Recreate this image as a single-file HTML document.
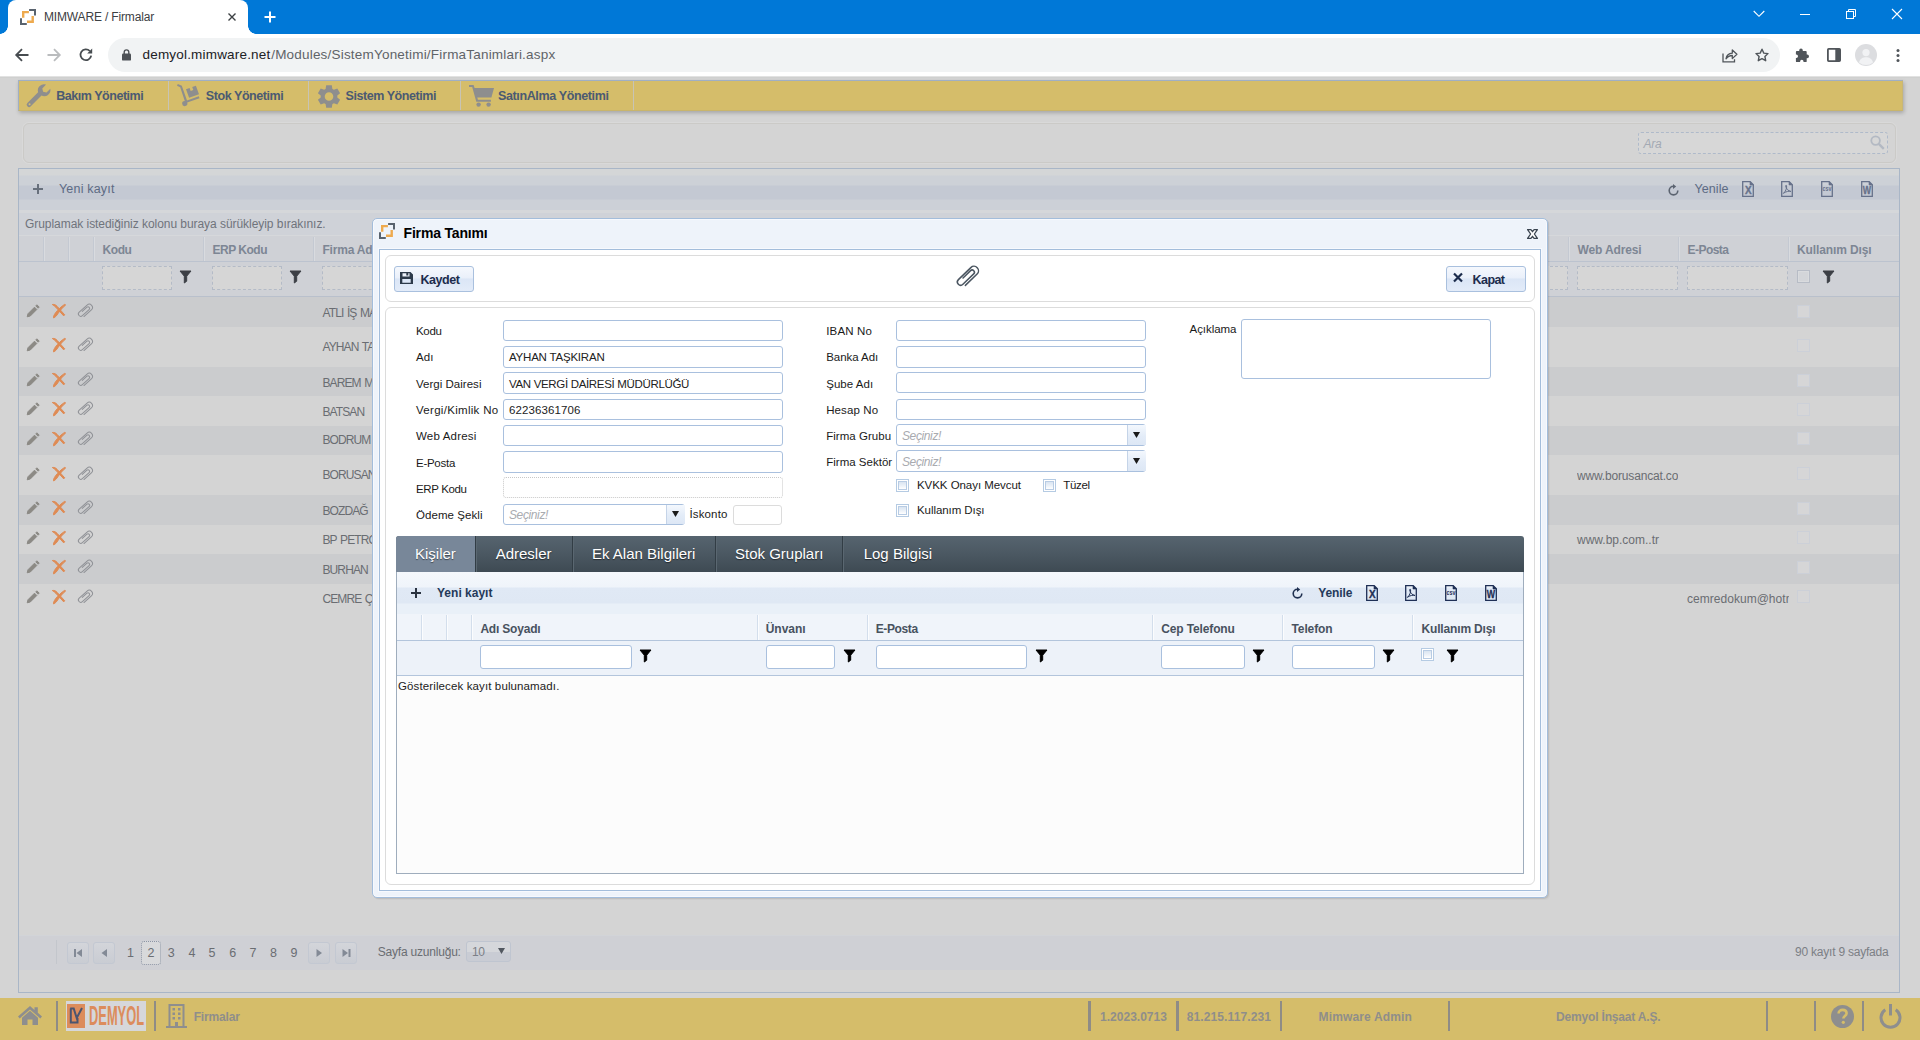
<!DOCTYPE html>
<html lang="tr"><head><meta charset="utf-8"><title>MIMWARE / Firmalar</title>
<style>
*{box-sizing:border-box;margin:0;padding:0}
html,body{width:1920px;height:1040px;overflow:hidden}
body{position:relative;background:#d4d4d4;font-family:"Liberation Sans",sans-serif;font-size:11.5px;color:#000}
.a{position:absolute}
.t{position:absolute;white-space:nowrap;line-height:16px;height:16px}
.b{font-weight:bold}
.i{font-style:italic}
svg{position:absolute;overflow:visible}
/* chrome */
#tabstrip{left:0;top:0;width:1920px;height:34px;background:#0078d7}
#tab{left:8px;top:0;width:240px;height:34px;background:#fff;border-radius:8px 8px 0 0}
#toolbar{left:0;top:34px;width:1920px;height:42px;background:#fff}
#omni{left:108px;top:38px;width:1672px;height:34px;border-radius:17px;background:#f1f3f4}
/* page */
#menu{left:18px;top:80px;width:1885px;height:31px;background:#d5bd6a;border:1px solid #a0afc4;border-right-color:#c9b774;border-bottom-color:#c9b56c;box-shadow:1px 2px 4px rgba(0,0,0,.22)}
.msep{position:absolute;top:81px;width:1px;height:29px;background:#c8c4b4}
.mt{font-size:12.5px;font-weight:bold;color:#4b5a72;top:88px}
#srch{left:23px;top:123px;width:1873px;height:40px;border:1px solid #cbcac7;border-radius:6px;box-shadow:0 0 0 1px #d9d9d9}
#grid{left:18px;top:168px;width:1882px;height:825px;border:1px solid #a9b6c7}
.gt{color:#6f747c}
.gh{font-weight:bold;color:#7d8694;font-size:12px}
.row{position:absolute;left:19px;width:1880px}
.alt{background:#cbccce}
.fin{position:absolute;border:1px dashed #b4bbc7;background:#d6d6d6}
.cell{color:#6a6d72}
/* bottom */
#bbar{left:0;top:998px;width:1920px;height:42px;background:#d5bd6a}
.bsep{position:absolute;top:1001px;height:30px;background:#8f8c86}
.bt{font-weight:bold;color:#8f8e8a;font-size:12px;top:1009px}
/* modal */
#modal{left:372px;top:218px;width:1176px;height:680px;border:1px solid #a3bddb;border-radius:5px;background:#eef3fa;box-shadow:inset 0 0 0 1px #f7f9fd,1px 1px 0 rgba(0,0,0,.07),2px 2px 1px rgba(0,0,0,.03)}
#mcont{left:379px;top:249px;width:1162px;height:642px;border:1px solid #a3bddb;background:#fff;box-shadow:0 0 0 1px #f7f9fd}
.pnl{position:absolute;border:1px solid #dcdcdc;border-radius:6px;background:#fff}
.lbl{color:#1a1a1a;font-size:11.5px}
.inp{position:absolute;height:21px;border:1px solid #a9c0de;border-radius:3px;background:#fff}
.cmb{position:absolute;width:19px;height:19px;background:linear-gradient(#f4f8fd,#e3ecf8 55%,#dde7f5);border-left:1px solid #c5d4e8}
.ph{color:#a9abb0;font-style:italic}
.btn{position:absolute;height:25px;border:1px solid #a9c0de;border-radius:3px;background:linear-gradient(#f5f8fd 0,#eaf0fa 45%,#dbe6f6 50%,#e3ecf9 100%)}
.cb{position:absolute;width:13px;height:13px;border:1px solid #b5cbe3;background:#fff}.cb:after{content:'';position:absolute;box-sizing:border-box;left:1px;top:1px;width:9px;height:9px;border:1px solid #b8cce4;background:linear-gradient(#d9e4f1,#eef3f9 60%,#fff)}
#tabs{left:396px;top:536px;width:1128px;height:36px;background:linear-gradient(#56646f 0,#4b5862 50%,#3e4a53 100%);border-radius:3px 3px 0 0}
.tb{position:absolute;top:536px;height:36px;border-right:1px solid #2f3a42;box-shadow:1px 0 0 #5d6a74}
.tt{font-size:15px;color:#fff;top:544px;line-height:20px;height:20px;text-shadow:0 1px 1px rgba(0,0,0,.5)}
#ig{left:396px;top:572px;width:1128px;height:302px;border:1px solid #9fadbd;border-top:none;background:#fcfcfc}
.ih{font-weight:bold;color:#48525f;font-size:12px}
</style></head>
<body>
<!-- ===== browser chrome ===== -->
<div class="a" id="tabstrip"></div>
<div class="a" id="tab"></div>
<div class="a" style="left:0;top:26px;width:8px;height:8px;background:radial-gradient(circle at 0 0,#0078d7 7.5px,#fff 8px)"></div>
<div class="a" style="left:248px;top:26px;width:8px;height:8px;background:radial-gradient(circle at 100% 0,#0078d7 7.5px,#fff 8px)"></div>
<div class="a" id="toolbar"></div>
<div class="a" style="left:0;top:76px;width:1920px;height:1px;background:#e2e2e2"></div><div class="a" style="left:0;top:77px;width:1920px;height:1px;background:#cfd0cf"></div>
<div class="a" id="omni"></div>
<span class="t" style="left: 44px; top: 9px; font-size: 12px; color: rgb(60, 64, 67); letter-spacing: -0.16px;">MIMWARE / Firmalar</span>
<span class="t" style="left: 142.5px; top: 46px; font-size: 13.5px; color: rgb(32, 33, 36); line-height: 18px; height: 18px; letter-spacing: 0.19px;">demyol.mimware.net</span>
<span class="t" style="left: 271.2px; top: 46px; font-size: 13.5px; color: rgb(95, 99, 104); line-height: 18px; height: 18px; letter-spacing: 0.2px;">/Modules/SistemYonetimi/FirmaTanimlari.aspx</span>
<!-- favicon -->
<svg style="left:20px;top:9px" width="16" height="16" viewBox="0 0 16 16" fill="none"><path d="M9.100 1H15V6.500" stroke="#59636e" stroke-width="2"></path><path d="M1 9.200V15H6.800" stroke="#59636e" stroke-width="2"></path><path d="M3.200 8.700V3.100H8.900" stroke="#eeaa4e" stroke-width="2.400"></path><path d="M12.700 6.900V12.800H7" stroke="#eeaa4e" stroke-width="2.400"></path></svg>
<!-- tab close -->
<svg style="left:228px;top:13px" width="8" height="8" viewBox="0 0 8 8"><path d="M.5.5l7 7M7.5.5l-7 7" stroke="#3c4043" stroke-width="1.4" fill="none"></path></svg>
<!-- new tab -->
<svg style="left:264px;top:11px" width="12" height="12" viewBox="0 0 12 12"><path d="M6 .5v11M.5 6h11" stroke="#fff" stroke-width="2" fill="none"></path></svg>
<!-- back / forward / reload -->
<svg style="left:15px;top:48px" width="14" height="14" viewBox="0 0 14 14"><path d="M13.5 7H2M7 1.2L1.2 7 7 12.8" stroke="#474c50" stroke-width="1.8" fill="none"></path></svg>
<svg style="left:47px;top:48px" width="14" height="14" viewBox="0 0 14 14"><path d="M.5 7H12M7 1.2L12.8 7 7 12.8" stroke="#babcbe" stroke-width="1.8" fill="none"></path></svg>
<svg style="left:79px;top:48px" width="14" height="14" viewBox="0 0 14 14"><path d="M12.2 7.6A5.4 5.4 0 1 1 10.8 3" stroke="#474c50" stroke-width="1.8" fill="none"></path><path d="M13.2.6v5h-5z" fill="#474c50"></path></svg>
<!-- lock -->
<svg style="left:122px;top:49px" width="9" height="12" viewBox="0 0 9 12"><rect x="0" y="4.6" width="9" height="7" rx="1.2" fill="#4d5156"></rect><path d="M2.2 5V3.2a2.3 2.3 0 0 1 4.6 0V5" stroke="#4d5156" stroke-width="1.4" fill="none"></path></svg>
<!-- share -->
<svg style="left:1722px;top:48px" width="16" height="15" viewBox="0 0 16 15"><path d="M1 5.5v8.3h11.5v-2.6" stroke="#50555a" stroke-width="1.3" fill="none"></path><path d="M4 10.8c.6-3.6 2.8-5.4 6.3-5.6V2l4.6 4.3-4.6 4.3V7.5c-2.6 0-4.600.900-6.300 3.300z" stroke="#50555a" stroke-width="1.3" fill="none" stroke-linejoin="round"></path></svg>
<!-- star -->
<svg style="left:1755px;top:48px" width="14" height="14" viewBox="0 0 14 14"><path d="M7 1.2l1.8 3.900 4.200.500-3.100 2.900.8 4.200L7 10.600l-3.700 2.100.8-4.200L1 5.600l4.200-.5z" stroke="#50555a" stroke-width="1.4" fill="none" stroke-linejoin="round"></path></svg>
<!-- puzzle -->
<svg style="left:1794px;top:48px" width="15" height="15" viewBox="0 0 15 15"><path d="M5.200 2.400a1.800 1.800 0 0 1 3.600 0V3h3a.9.900 0 0 1 .9.900v2.700h.5a1.800 1.800 0 0 1 0 3.600h-.5v3a.9.900 0 0 1-.9.900H9.500v-.7a1.700 1.700 0 0 0-3.400 0v.7H2.800a.9.900 0 0 1-.9-.9V10h.4a1.700 1.700 0 0 0 0-3.400h-.4V3.900A.9.900 0 0 1 2.800 3h2.400z" fill="#50555a"></path></svg>
<!-- side panel -->
<svg style="left:1827px;top:48px" width="14" height="14" viewBox="0 0 14 14"><rect x=".9" y=".9" width="12.200" height="12.200" rx=".8" stroke="#50555a" stroke-width="1.800" fill="none"></rect><rect x="8.300" y="1" width="4.800" height="12" fill="#50555a"></rect></svg>
<!-- avatar -->
<svg style="left:1855px;top:44px" width="22" height="22" viewBox="0 0 22 22"><circle cx="11" cy="11" r="11" fill="#dcdde0"></circle><circle cx="11" cy="8.600" r="3.600" fill="#f1f2f4"></circle><path d="M4 18.500c1-4 4-5.300 7-5.300s6 1.300 7 5.300a11 11 0 0 1-14 0z" fill="#f1f2f4"></path></svg>
<!-- kebab -->
<svg style="left:1896px;top:48px" width="4" height="15" viewBox="0 0 4 15"><circle cx="2" cy="2.400" r="1.500" fill="#50555a"></circle><circle cx="2" cy="7.500" r="1.500" fill="#50555a"></circle><circle cx="2" cy="12.600" r="1.500" fill="#50555a"></circle></svg>
<!-- window controls -->
<svg style="left:1753px;top:10px" width="12" height="8" viewBox="0 0 12 8"><path d="M.7 1l5.300 5.300L11.300 1" stroke="#fff" stroke-width="1.100" fill="none"></path></svg>
<svg style="left:1800px;top:14px" width="10" height="1" viewBox="0 0 10 1"><rect width="10" height="1" fill="#fff"></rect></svg>
<svg style="left:1846px;top:9px" width="10" height="10" viewBox="0 0 10 10"><rect x=".5" y="2.500" width="7" height="7" stroke="#fff" fill="none"></rect><path d="M2.500 2.500V.5h7v7h-2" stroke="#fff" fill="none"></path></svg>
<svg style="left:1892px;top:9px" width="10" height="10" viewBox="0 0 10 10"><path d="M0 0l10 10M10 0L0 10" stroke="#fff" stroke-width="1.100" fill="none"></path></svg>

<!-- page -->
<div class="a" id="menu"></div>
<div class="msep" style="left:168px"></div>
<div class="msep" style="left:308px"></div>
<div class="msep" style="left:460px"></div>
<div class="msep" style="left:633px"></div>
<span class="t mt" style="left: 56.3px; letter-spacing: -0.47px;">Bakım Yönetimi</span>
<span class="t mt" style="left: 205.8px; letter-spacing: -0.43px;">Stok Yönetimi</span>
<span class="t mt" style="left: 345.5px; letter-spacing: -0.44px;">Sistem Yönetimi</span>
<span class="t mt" style="left: 498px; letter-spacing: -0.37px;">SatınAlma Yönetimi</span>
<svg style="left:26px;top:84px" width="25" height="24" viewBox="0 0 25 24" fill="#8e8e8e"><path d="M24.300 4.800l-3.800 3.800-3.400-.8-.8-3.400L20.100.6a6.200 6.200 0 0 0-8 7.600L1.400 18.900a2.400 2.400 0 0 0 3.400 3.400L15.500 11.600a6.200 6.200 0 0 0 8.800-6.800zM3.600 21.300a1 1 0 1 1 0-2 1 1 0 0 1 0 2z"></path></svg>
<svg style="left:177px;top:84px" width="24" height="23" viewBox="0 0 24 23" fill="#8e8e8e"><path d="M0 1.800L.8 0l4 1.700L10 16.500l11.800-4.200.7 1.900-12.300 4.400a2.600 2.600 0 1 1-2.400-1.700L3.200 3.200z"></path><path d="M9 5.200l3.600-1.300 1.100 3 2.600-.9-1.100-3 3.700-1.300 3.100 8.600-9.900 3.500z"></path></svg>
<svg style="left:318px;top:84.500px" width="22" height="23" viewBox="0 0 22 23" fill="#8e8e8e" fill-rule="evenodd"><path d="M7.6 3.9L8.2 0.3L13.8 0.3L14.4 3.9L15.9 4.8L19.3 3.5L22.1 8.3L19.3 10.6L19.3 12.4L22.1 14.7L19.3 19.5L15.9 18.2L14.4 19.1L13.8 22.7L8.2 22.7L7.6 19.1L6.1 18.2L2.7 19.5L-0.1 14.7L2.7 12.4L2.7 10.6L-0.1 8.3L2.7 3.5L6.1 4.8ZM6.7 11.5a4.3 4.3 0 1 0 8.6 0a4.3 4.3 0 1 0 -8.6 0z"></path></svg>
<svg style="left:469px;top:85px" width="25" height="22" viewBox="0 0 25 22" fill="#8e8e8e"><path d="M0 0h4.600l1 3H25l-2.600 9.600H8.300l.6 2.200h13v2H7.300L3.200 2H0z"></path><circle cx="9.600" cy="19.600" r="2.200"></circle><circle cx="19.600" cy="19.600" r="2.200"></circle></svg>
<div class="a" id="srch"></div>
<div class="a" style="left:1638px;top:132px;width:250px;height:22px;border:1px dashed #afbaca;border-radius:3px;background:#d7d7d7"></div>
<span class="t i" style="left: 1643.5px; top: 136px; color: rgb(163, 169, 179); font-size: 12px; letter-spacing: -0.23px;">Ara</span>
<svg style="left:1870px;top:135px" width="15" height="15" viewBox="0 0 15 15" fill="none" stroke="#b3b9c3"><circle cx="5.600" cy="5.600" r="4.300" stroke-width="1.800"></circle><path d="M8.800 8.800l5 5" stroke-width="2.400"></path></svg>
<div class="a" id="grid"></div>
<div class="a" style="left:19px;top:169px;width:1880px;height:42px;background:linear-gradient(#d4d6d7 0,#d4d6d7 6px,#cdd1d7 7px,#cdd1d7 16px,#c4c9d3 17px,#c4c9d3 30px,#ccd0d7 31px,#ccd0d7 41px,#d5d7da 41px)"></div>
<div class="a" style="left:19px;top:210px;width:1880px;height:3px;background:#d5d7da"></div>
<div class="a" style="left:19px;top:213px;width:1880px;height:22px;background:#cfd2d8"></div>
<div class="a" style="left:19px;top:235px;width:1880px;height:1px;background:#d6d8db"></div>
<div class="a" style="left:19px;top:236px;width:1880px;height:25px;background:#cfd1d6"></div>
<div class="a" style="left:19px;top:261px;width:1880px;height:1px;background:#bcc3cf"></div>
<div class="a" style="left:19px;top:262px;width:1880px;height:34px;background:#cfd1d6"></div>
<div class="a" style="left:19px;top:296px;width:1880px;height:1px;background:#b9c0cc"></div>
<svg style="left:33px;top:184px" width="10" height="10" fill="#68707c" stroke="#68707c" viewBox="0 0 10 10"><path d="M5 0V10M0 5H10" fill="none" stroke-width="2"></path></svg>
<span class="t" style="left: 59px; top: 181px; font-size: 12.5px; color: rgb(93, 107, 132); letter-spacing: 0.18px;">Yeni kayıt</span>
<svg style="left:1668px;top:184px" width="11" height="12" fill="#5b6370" stroke="#5b6370" viewBox="0 0 11 12"><path d="M5.500 2.300A4.300 4.300 0 1 0 9.800 6.600" fill="none" stroke-width="1.600"></path><path d="M5 0L8.200 2.500 5 4.900Z" stroke="none"></path></svg>
<span class="t" style="left: 1694.5px; top: 181px; font-size: 12.5px; color: rgb(93, 107, 132); letter-spacing: 0.07px;">Yenile</span>
<svg style="left:1741.5px;top:181px" width="12" height="16" viewBox="0 0 12 16" fill="#66718a" stroke="#66718a"><path d="M.7.700H8.200L11.300 3.800V15.300H.7Z" fill="none" stroke-width="1.300"></path><path d="M8 .7L11.300 4H8Z" stroke-width=".6"></path><text transform="translate(6.200 13.300) scale(.9 1)" font-family="Liberation Sans,sans-serif" font-weight="bold" text-anchor="middle" stroke="none" font-size="11" fill="#66718a" style="stroke:#66718a;stroke-width:.35px">X</text></svg>
<svg style="left:1781px;top:181px" width="12" height="16" viewBox="0 0 12 16" fill="#66718a" stroke="#66718a"><path d="M.7.700H8.200L11.300 3.800V15.300H.7Z" fill="none" stroke-width="1.300"></path><path d="M8 .7L11.300 4H8Z" stroke-width=".6"></path><path d="M2.300 12.400C4.600 10.600 5.900 7.300 5.600 4.900 5.400 3.800 4.500 4.100 4.700 5.200 5.100 7.600 7.200 10 10 10.500 8.500 9.700 4.500 10.600 2.300 12.400Z" fill="none" stroke-width="1"></path></svg>
<svg style="left:1820.5px;top:181px" width="12" height="16" viewBox="0 0 12 16" fill="#66718a" stroke="#66718a"><path d="M.7.700H8.200L11.300 3.800V15.300H.7Z" fill="none" stroke-width="1.300"></path><path d="M8 .7L11.300 4H8Z" stroke-width=".6"></path><text transform="translate(6 10) scale(.82 1)" font-family="Liberation Sans,sans-serif" font-weight="bold" text-anchor="middle" stroke="none" font-size="6.500" fill="#66718a">csv</text></svg>
<svg style="left:1860.5px;top:181px" width="12" height="16" viewBox="0 0 12 16" fill="#66718a" stroke="#66718a"><path d="M.7.700H8.200L11.300 3.800V15.300H.7Z" fill="none" stroke-width="1.300"></path><path d="M8 .7L11.300 4H8Z" stroke-width=".6"></path><text transform="translate(6 13.200) scale(.8 1)" font-family="Liberation Sans,sans-serif" font-weight="bold" text-anchor="middle" stroke="none" font-size="11" fill="#66718a" style="stroke:#66718a;stroke-width:.3px">W</text></svg>
<span class="t gt" style="left: 25px; top: 216px; font-size: 12px; letter-spacing: -0.05px;">Gruplamak istediğiniz kolonu buraya sürükleyip bırakınız.</span>
<div class="a" style="left:43px;top:237px;width:1px;height:24px;background:#c4c9d2"></div><div class="a" style="left:44px;top:237px;width:1px;height:24px;background:#d9dbdf"></div>
<div class="a" style="left:68px;top:237px;width:1px;height:24px;background:#c4c9d2"></div><div class="a" style="left:69px;top:237px;width:1px;height:24px;background:#d9dbdf"></div>
<div class="a" style="left:93px;top:237px;width:1px;height:24px;background:#c4c9d2"></div><div class="a" style="left:94px;top:237px;width:1px;height:24px;background:#d9dbdf"></div>
<div class="a" style="left:203px;top:237px;width:1px;height:24px;background:#c4c9d2"></div><div class="a" style="left:204px;top:237px;width:1px;height:24px;background:#d9dbdf"></div>
<div class="a" style="left:313px;top:237px;width:1px;height:24px;background:#c4c9d2"></div><div class="a" style="left:314px;top:237px;width:1px;height:24px;background:#d9dbdf"></div>
<div class="a" style="left:1568px;top:237px;width:1px;height:24px;background:#c4c9d2"></div><div class="a" style="left:1569px;top:237px;width:1px;height:24px;background:#d9dbdf"></div>
<div class="a" style="left:1678px;top:237px;width:1px;height:24px;background:#c4c9d2"></div><div class="a" style="left:1679px;top:237px;width:1px;height:24px;background:#d9dbdf"></div>
<div class="a" style="left:1788px;top:237px;width:1px;height:24px;background:#c4c9d2"></div><div class="a" style="left:1789px;top:237px;width:1px;height:24px;background:#d9dbdf"></div>
<span class="t gh" style="left: 102.5px; top: 242px; letter-spacing: -0.41px;">Kodu</span>
<span class="t gh" style="left: 212.5px; top: 242px; letter-spacing: -0.49px;">ERP Kodu</span>
<span class="t gh" style="left: 322.5px; top: 242px; letter-spacing: -0.21px;">Firma Adı</span>
<span class="t gh" style="left: 1577.5px; top: 242px; letter-spacing: -0.14px;">Web Adresi</span>
<span class="t gh" style="left: 1687.5px; top: 242px; letter-spacing: -0.53px;">E-Posta</span>
<span class="t gh" style="left: 1797px; top: 242px; letter-spacing: -0.12px;">Kullanım Dışı</span>
<div class="fin" style="left:102px;top:266px;width:70px;height:24px"></div>
<div class="fin" style="left:212px;top:266px;width:70px;height:24px"></div>
<div class="fin" style="left:322px;top:266px;width:60px;height:24px"></div>
<div class="fin" style="left:1540px;top:266px;width:28px;height:24px"></div>
<div class="fin" style="left:1577px;top:266px;width:101px;height:24px"></div>
<div class="fin" style="left:1687px;top:266px;width:101px;height:24px"></div>
<svg style="left:180px;top:271px" width="11" height="12" fill="#3c3f45" stroke="#3c3f45" viewBox="0 0 11 12"><path d="M0 0H11L6.700 5.200V10.200L4.300 12V5.200Z"></path></svg>
<svg style="left:290px;top:271px" width="11" height="12" fill="#3c3f45" stroke="#3c3f45" viewBox="0 0 11 12"><path d="M0 0H11L6.700 5.200V10.200L4.300 12V5.200Z"></path></svg>
<svg style="left:1823px;top:271px" width="11" height="12" fill="#3c3f45" stroke="#3c3f45" viewBox="0 0 11 12"><path d="M0 0H11L6.700 5.200V10.200L4.300 12V5.200Z"></path></svg>
<div class="a" style="left:1797px;top:270px;width:13px;height:13px;border:1px solid #b7bcc6;background:#d3d5d9;box-shadow:inset 0 0 0 1px #d9dbde"></div>
<div class="row alt" style="top:297px;height:30px"></div>
<svg style="left:27px;top:305px" width="12" height="12" fill="#8c8a85" stroke="#8c8a85" viewBox="0 0 12 12"><path d="M8.800.9L9.900-.2 12.200 2.100 11.100 3.200ZM7.500 2.200L9.800 4.500 3.300 11 .2 11.800 1 8.700Z"></path></svg>
<svg style="left:52px;top:304px" width="14" height="14" fill="#df8b54" stroke="#df8b54" viewBox="0 0 14 14"><path d="M12.600.4C9.500 2.200 5.800 5.800 3.400 9 2 11 1.200 12.600 1.600 13.900 3.200 13.500 4.600 11.600 6 9.600 8 6.600 10.800 3.200 13.700 1 13.500.6 13.100.4 12.600.4Z"></path><path d="M.3.500C2.200.200 3.800.800 5.200 2.400 7.600 5 10.400 8.300 12.700 10.800L11.700 11.900C9.400 9.400 6.600 6.100 4.100 3.600 2.900 2.300 1.600 1.300.3.500Z"></path></svg>
<svg style="left:78px;top:304px" width="15" height="14" fill="#8f9196" stroke="#8f9196" viewBox="0 0 15 14"><g transform="translate(7.500 6.800) rotate(48)" fill="none" stroke-width="1" stroke-linecap="round"><path d="M3.200 5V-5A3.200 3.200 0 0 0-3.200-5V5.600A2.350 2.350 0 0 0 1.500 5.600V-3.500A1.600 1.600 0 0 0-1.700-3.500V2.800"></path></g></svg>
<span class="t cell" style="left:322.500px;top:304.5px;font-size:12px;letter-spacing:-.9px;word-spacing:1.100px">ATLI İŞ MAKİNALARI</span>
<div class="a" style="left:1797px;top:304.5px;width:13px;height:13px;border:1px solid #ccd0d8;background:#d6d6d7"></div>
<svg style="left:27px;top:339.3px" width="12" height="12" fill="#8c8a85" stroke="#8c8a85" viewBox="0 0 12 12"><path d="M8.800.9L9.900-.2 12.200 2.100 11.100 3.200ZM7.500 2.200L9.800 4.500 3.300 11 .2 11.800 1 8.700Z"></path></svg>
<svg style="left:52px;top:338.3px" width="14" height="14" fill="#df8b54" stroke="#df8b54" viewBox="0 0 14 14"><path d="M12.600.4C9.500 2.200 5.800 5.800 3.400 9 2 11 1.200 12.600 1.600 13.900 3.200 13.500 4.600 11.600 6 9.600 8 6.600 10.800 3.200 13.700 1 13.500.6 13.100.4 12.600.4Z"></path><path d="M.3.500C2.200.200 3.800.800 5.200 2.400 7.600 5 10.400 8.300 12.700 10.800L11.700 11.900C9.400 9.400 6.600 6.100 4.100 3.600 2.900 2.300 1.600 1.300.3.500Z"></path></svg>
<svg style="left:78px;top:338.3px" width="15" height="14" fill="#8f9196" stroke="#8f9196" viewBox="0 0 15 14"><g transform="translate(7.500 6.800) rotate(48)" fill="none" stroke-width="1" stroke-linecap="round"><path d="M3.200 5V-5A3.200 3.200 0 0 0-3.200-5V5.600A2.350 2.350 0 0 0 1.500 5.600V-3.500A1.600 1.600 0 0 0-1.700-3.500V2.800"></path></g></svg>
<span class="t cell" style="left:322.500px;top:339.4px;font-size:12px;letter-spacing:-.9px;word-spacing:1.100px">AYHAN TAŞKIRAN</span>
<div class="a" style="left:1797px;top:338.8px;width:13px;height:13px;border:1px solid #ccd0d8;background:#d6d6d7"></div>
<div class="row alt" style="top:367px;height:29px"></div>
<svg style="left:27px;top:374.2px" width="12" height="12" fill="#8c8a85" stroke="#8c8a85" viewBox="0 0 12 12"><path d="M8.800.9L9.900-.2 12.200 2.100 11.100 3.200ZM7.500 2.200L9.800 4.500 3.300 11 .2 11.800 1 8.700Z"></path></svg>
<svg style="left:52px;top:373.2px" width="14" height="14" fill="#df8b54" stroke="#df8b54" viewBox="0 0 14 14"><path d="M12.600.4C9.500 2.200 5.800 5.800 3.400 9 2 11 1.200 12.600 1.600 13.900 3.200 13.500 4.600 11.600 6 9.600 8 6.600 10.800 3.200 13.700 1 13.500.6 13.100.4 12.600.4Z"></path><path d="M.3.500C2.200.200 3.800.800 5.200 2.400 7.600 5 10.400 8.300 12.700 10.800L11.700 11.900C9.400 9.400 6.600 6.100 4.100 3.600 2.900 2.300 1.600 1.300.3.500Z"></path></svg>
<svg style="left:78px;top:373.2px" width="15" height="14" fill="#8f9196" stroke="#8f9196" viewBox="0 0 15 14"><g transform="translate(7.500 6.800) rotate(48)" fill="none" stroke-width="1" stroke-linecap="round"><path d="M3.200 5V-5A3.200 3.200 0 0 0-3.200-5V5.600A2.350 2.350 0 0 0 1.500 5.600V-3.500A1.600 1.600 0 0 0-1.700-3.500V2.800"></path></g></svg>
<span class="t cell" style="left:322.500px;top:374.5px;font-size:12px;letter-spacing:-.9px;word-spacing:1.100px">BAREM MÜHENDİSLİK</span>
<div class="a" style="left:1797px;top:373.7px;width:13px;height:13px;border:1px solid #ccd0d8;background:#d6d6d7"></div>
<svg style="left:27px;top:403.4px" width="12" height="12" fill="#8c8a85" stroke="#8c8a85" viewBox="0 0 12 12"><path d="M8.800.9L9.900-.2 12.200 2.100 11.100 3.200ZM7.500 2.200L9.800 4.500 3.300 11 .2 11.800 1 8.700Z"></path></svg>
<svg style="left:52px;top:402.4px" width="14" height="14" fill="#df8b54" stroke="#df8b54" viewBox="0 0 14 14"><path d="M12.600.4C9.500 2.200 5.800 5.800 3.400 9 2 11 1.200 12.600 1.600 13.900 3.200 13.500 4.600 11.600 6 9.600 8 6.600 10.800 3.200 13.700 1 13.500.6 13.100.4 12.600.4Z"></path><path d="M.3.500C2.200.200 3.800.800 5.200 2.400 7.600 5 10.400 8.300 12.700 10.800L11.700 11.900C9.400 9.400 6.600 6.100 4.100 3.600 2.900 2.300 1.600 1.300.3.500Z"></path></svg>
<svg style="left:78px;top:402.4px" width="15" height="14" fill="#8f9196" stroke="#8f9196" viewBox="0 0 15 14"><g transform="translate(7.500 6.800) rotate(48)" fill="none" stroke-width="1" stroke-linecap="round"><path d="M3.200 5V-5A3.200 3.200 0 0 0-3.200-5V5.600A2.350 2.350 0 0 0 1.500 5.600V-3.500A1.600 1.600 0 0 0-1.700-3.500V2.800"></path></g></svg>
<span class="t cell" style="left:322.500px;top:403.5px;font-size:12px;letter-spacing:-.9px;word-spacing:1.100px">BATSAN</span>
<div class="a" style="left:1797px;top:402.9px;width:13px;height:13px;border:1px solid #ccd0d8;background:#d6d6d7"></div>
<div class="row alt" style="top:426px;height:29px"></div>
<svg style="left:27px;top:432.6px" width="12" height="12" fill="#8c8a85" stroke="#8c8a85" viewBox="0 0 12 12"><path d="M8.800.9L9.900-.2 12.200 2.100 11.100 3.200ZM7.500 2.200L9.800 4.500 3.300 11 .2 11.800 1 8.700Z"></path></svg>
<svg style="left:52px;top:431.6px" width="14" height="14" fill="#df8b54" stroke="#df8b54" viewBox="0 0 14 14"><path d="M12.600.4C9.500 2.200 5.800 5.800 3.400 9 2 11 1.200 12.600 1.600 13.900 3.200 13.500 4.600 11.600 6 9.600 8 6.600 10.800 3.200 13.700 1 13.500.6 13.100.4 12.600.4Z"></path><path d="M.3.500C2.200.200 3.800.800 5.200 2.400 7.600 5 10.400 8.300 12.700 10.800L11.700 11.900C9.400 9.400 6.600 6.100 4.100 3.600 2.900 2.300 1.600 1.300.3.500Z"></path></svg>
<svg style="left:78px;top:431.6px" width="15" height="14" fill="#8f9196" stroke="#8f9196" viewBox="0 0 15 14"><g transform="translate(7.500 6.800) rotate(48)" fill="none" stroke-width="1" stroke-linecap="round"><path d="M3.200 5V-5A3.200 3.200 0 0 0-3.200-5V5.600A2.350 2.350 0 0 0 1.500 5.600V-3.500A1.600 1.600 0 0 0-1.700-3.500V2.800"></path></g></svg>
<span class="t cell" style="left:322.500px;top:432.3px;font-size:12px;letter-spacing:-.9px;word-spacing:1.100px">BODRUM BELEDİYESİ</span>
<div class="a" style="left:1797px;top:432.1px;width:13px;height:13px;border:1px solid #ccd0d8;background:#d6d6d7"></div>
<svg style="left:27px;top:467.7px" width="12" height="12" fill="#8c8a85" stroke="#8c8a85" viewBox="0 0 12 12"><path d="M8.800.9L9.900-.2 12.200 2.100 11.100 3.200ZM7.500 2.200L9.800 4.500 3.300 11 .2 11.800 1 8.700Z"></path></svg>
<svg style="left:52px;top:466.7px" width="14" height="14" fill="#df8b54" stroke="#df8b54" viewBox="0 0 14 14"><path d="M12.600.4C9.500 2.200 5.800 5.800 3.400 9 2 11 1.200 12.600 1.600 13.900 3.200 13.500 4.600 11.600 6 9.600 8 6.600 10.800 3.200 13.700 1 13.500.6 13.100.4 12.600.4Z"></path><path d="M.3.500C2.200.200 3.800.800 5.200 2.400 7.600 5 10.400 8.300 12.700 10.800L11.700 11.900C9.400 9.400 6.600 6.100 4.100 3.600 2.900 2.300 1.600 1.300.3.500Z"></path></svg>
<svg style="left:78px;top:466.7px" width="15" height="14" fill="#8f9196" stroke="#8f9196" viewBox="0 0 15 14"><g transform="translate(7.500 6.800) rotate(48)" fill="none" stroke-width="1" stroke-linecap="round"><path d="M3.200 5V-5A3.200 3.200 0 0 0-3.200-5V5.600A2.350 2.350 0 0 0 1.500 5.600V-3.500A1.600 1.600 0 0 0-1.700-3.500V2.800"></path></g></svg>
<span class="t cell" style="left:322.500px;top:467.4px;font-size:12px;letter-spacing:-.9px;word-spacing:1.100px">BORUSAN MAKİNA</span>
<div class="a" style="left:1797px;top:467.2px;width:13px;height:13px;border:1px solid #ccd0d8;background:#d6d6d7"></div>
<div class="row alt" style="top:495px;height:30px"></div>
<svg style="left:27px;top:502.2px" width="12" height="12" fill="#8c8a85" stroke="#8c8a85" viewBox="0 0 12 12"><path d="M8.800.9L9.900-.2 12.200 2.100 11.100 3.200ZM7.500 2.200L9.800 4.500 3.300 11 .2 11.800 1 8.700Z"></path></svg>
<svg style="left:52px;top:501.2px" width="14" height="14" fill="#df8b54" stroke="#df8b54" viewBox="0 0 14 14"><path d="M12.600.4C9.500 2.200 5.800 5.800 3.400 9 2 11 1.200 12.600 1.600 13.900 3.200 13.500 4.600 11.600 6 9.600 8 6.600 10.800 3.200 13.700 1 13.500.6 13.100.4 12.600.4Z"></path><path d="M.3.500C2.200.200 3.800.800 5.200 2.400 7.600 5 10.400 8.300 12.700 10.800L11.700 11.900C9.400 9.400 6.600 6.100 4.100 3.600 2.900 2.300 1.600 1.300.3.500Z"></path></svg>
<svg style="left:78px;top:501.2px" width="15" height="14" fill="#8f9196" stroke="#8f9196" viewBox="0 0 15 14"><g transform="translate(7.500 6.800) rotate(48)" fill="none" stroke-width="1" stroke-linecap="round"><path d="M3.200 5V-5A3.200 3.200 0 0 0-3.200-5V5.600A2.350 2.350 0 0 0 1.500 5.600V-3.500A1.600 1.600 0 0 0-1.700-3.500V2.800"></path></g></svg>
<span class="t cell" style="left:322.500px;top:502.9px;font-size:12px;letter-spacing:-.9px;word-spacing:1.100px">BOZDAĞ</span>
<div class="a" style="left:1797px;top:501.7px;width:13px;height:13px;border:1px solid #ccd0d8;background:#d6d6d7"></div>
<svg style="left:27px;top:531.8px" width="12" height="12" fill="#8c8a85" stroke="#8c8a85" viewBox="0 0 12 12"><path d="M8.800.9L9.900-.2 12.200 2.100 11.100 3.200ZM7.500 2.200L9.800 4.500 3.300 11 .2 11.800 1 8.700Z"></path></svg>
<svg style="left:52px;top:530.8px" width="14" height="14" fill="#df8b54" stroke="#df8b54" viewBox="0 0 14 14"><path d="M12.600.4C9.500 2.200 5.800 5.800 3.400 9 2 11 1.200 12.600 1.600 13.900 3.200 13.500 4.600 11.600 6 9.600 8 6.600 10.800 3.200 13.700 1 13.500.6 13.100.4 12.600.4Z"></path><path d="M.3.500C2.200.200 3.800.800 5.200 2.400 7.600 5 10.400 8.300 12.700 10.800L11.700 11.900C9.400 9.400 6.600 6.100 4.100 3.600 2.900 2.300 1.600 1.300.3.500Z"></path></svg>
<svg style="left:78px;top:530.8px" width="15" height="14" fill="#8f9196" stroke="#8f9196" viewBox="0 0 15 14"><g transform="translate(7.500 6.800) rotate(48)" fill="none" stroke-width="1" stroke-linecap="round"><path d="M3.200 5V-5A3.200 3.200 0 0 0-3.200-5V5.600A2.350 2.350 0 0 0 1.500 5.600V-3.500A1.600 1.600 0 0 0-1.700-3.500V2.800"></path></g></svg>
<span class="t cell" style="left:322.500px;top:531.9px;font-size:12px;letter-spacing:-.9px;word-spacing:1.100px">BP PETROLLERİ A.Ş.</span>
<div class="a" style="left:1797px;top:531.3px;width:13px;height:13px;border:1px solid #ccd0d8;background:#d6d6d7"></div>
<div class="row alt" style="top:554px;height:30px"></div>
<svg style="left:27px;top:561.3px" width="12" height="12" fill="#8c8a85" stroke="#8c8a85" viewBox="0 0 12 12"><path d="M8.800.9L9.900-.2 12.200 2.100 11.100 3.200ZM7.500 2.200L9.800 4.500 3.300 11 .2 11.800 1 8.700Z"></path></svg>
<svg style="left:52px;top:560.3px" width="14" height="14" fill="#df8b54" stroke="#df8b54" viewBox="0 0 14 14"><path d="M12.600.4C9.500 2.200 5.800 5.800 3.400 9 2 11 1.200 12.600 1.600 13.900 3.200 13.500 4.600 11.600 6 9.600 8 6.600 10.800 3.200 13.700 1 13.500.6 13.100.4 12.600.4Z"></path><path d="M.3.500C2.200.200 3.800.800 5.200 2.400 7.600 5 10.400 8.300 12.700 10.800L11.700 11.900C9.400 9.400 6.600 6.100 4.100 3.600 2.900 2.300 1.600 1.300.3.500Z"></path></svg>
<svg style="left:78px;top:560.3px" width="15" height="14" fill="#8f9196" stroke="#8f9196" viewBox="0 0 15 14"><g transform="translate(7.500 6.800) rotate(48)" fill="none" stroke-width="1" stroke-linecap="round"><path d="M3.200 5V-5A3.200 3.200 0 0 0-3.200-5V5.600A2.350 2.350 0 0 0 1.500 5.600V-3.500A1.600 1.600 0 0 0-1.700-3.500V2.800"></path></g></svg>
<span class="t cell" style="left:322.500px;top:561.8px;font-size:12px;letter-spacing:-.9px;word-spacing:1.100px">BURHAN</span>
<div class="a" style="left:1797px;top:560.8px;width:13px;height:13px;border:1px solid #ccd0d8;background:#d6d6d7"></div>
<svg style="left:27px;top:590.9px" width="12" height="12" fill="#8c8a85" stroke="#8c8a85" viewBox="0 0 12 12"><path d="M8.800.9L9.900-.2 12.200 2.100 11.100 3.200ZM7.500 2.200L9.800 4.500 3.300 11 .2 11.800 1 8.700Z"></path></svg>
<svg style="left:52px;top:589.9px" width="14" height="14" fill="#df8b54" stroke="#df8b54" viewBox="0 0 14 14"><path d="M12.600.4C9.500 2.200 5.800 5.800 3.400 9 2 11 1.200 12.600 1.600 13.900 3.200 13.500 4.600 11.600 6 9.600 8 6.600 10.800 3.200 13.700 1 13.500.6 13.100.4 12.600.4Z"></path><path d="M.3.500C2.200.200 3.800.800 5.200 2.400 7.600 5 10.400 8.300 12.700 10.800L11.700 11.900C9.400 9.400 6.600 6.100 4.100 3.600 2.900 2.300 1.600 1.300.3.500Z"></path></svg>
<svg style="left:78px;top:589.9px" width="15" height="14" fill="#8f9196" stroke="#8f9196" viewBox="0 0 15 14"><g transform="translate(7.500 6.800) rotate(48)" fill="none" stroke-width="1" stroke-linecap="round"><path d="M3.200 5V-5A3.200 3.200 0 0 0-3.200-5V5.600A2.350 2.350 0 0 0 1.500 5.600V-3.500A1.600 1.600 0 0 0-1.700-3.500V2.800"></path></g></svg>
<span class="t cell" style="left:322.500px;top:590.6px;font-size:12px;letter-spacing:-.9px;word-spacing:1.100px">CEMRE ÇELİK</span>
<div class="a" style="left:1797px;top:590.4px;width:13px;height:13px;border:1px solid #ccd0d8;background:#d6d6d7"></div>
<div class="a" style="left:1577px;top:467.500px;width:101px;height:16px;overflow:hidden"><span class="t cell" style="left: 0px; top: 0px; font-size: 12px; letter-spacing: -0.17px;">www.borusancat.com</span></div>
<span class="t cell" style="left: 1577px; top: 531.5px; font-size: 12px;">www.bp.com..tr</span>
<div class="a" style="left:1687px;top:590.500px;width:102px;height:16px;overflow:hidden"><span class="t cell" style="left: 0px; top: 0px; font-size: 12px; letter-spacing: 0.03px;">cemredokum@hotmail.com</span></div>
<div class="a" style="left:19px;top:935px;width:1880px;height:35px;background:#cfd0d5;border-top:1px solid #d2d4d8"></div>
<div class="a" style="left:56px;top:940px;width:1px;height:24px;background:#c3c6cc"></div>
<div class="a" style="left:67px;top:942px;width:22px;height:22px;border:1px solid #c3c8d2;border-radius:3px;background:linear-gradient(#d3d5da,#c9ccd3)"></div>
<svg style="left:74px;top:949px" width="9" height="8" viewBox="0 0 9 8" fill="#838a96"><path d="M0 0h2v8H0zM8 0v8L2.500 4z"></path></svg>
<div class="a" style="left:93px;top:942px;width:22px;height:22px;border:1px solid #c3c8d2;border-radius:3px;background:linear-gradient(#d3d5da,#c9ccd3)"></div>
<svg style="left:100px;top:949px" width="9" height="8" viewBox="0 0 9 8" fill="#838a96"><path d="M7 0v8L1.500 4z"></path></svg>
<div class="a" style="left:308px;top:942px;width:22px;height:22px;border:1px solid #c3c8d2;border-radius:3px;background:linear-gradient(#d3d5da,#c9ccd3)"></div>
<svg style="left:315px;top:949px" width="9" height="8" viewBox="0 0 9 8" fill="#838a96"><path d="M1.500 0v8L7 4z"></path></svg>
<div class="a" style="left:335px;top:942px;width:22px;height:22px;border:1px solid #c3c8d2;border-radius:3px;background:linear-gradient(#d3d5da,#c9ccd3)"></div>
<svg style="left:342px;top:949px" width="9" height="8" viewBox="0 0 9 8" fill="#838a96"><path d="M6.500 0h2v8h-2zM.500 0v8L6 4z"></path></svg>
<div class="a" style="left:141px;top:941px;width:20px;height:24px;border:1px dotted #8c95a5;border-radius:3px;background:#d8d9db"></div>
<span class="t cell" style="left:120.6px;width:20px;text-align:center;top:944.500px;font-size:12.500px">1</span>
<span class="t cell" style="left:141px;width:20px;text-align:center;top:944.500px;font-size:12.500px">2</span>
<span class="t cell" style="left:161.2px;width:20px;text-align:center;top:944.500px;font-size:12.500px">3</span>
<span class="t cell" style="left:182px;width:20px;text-align:center;top:944.500px;font-size:12.500px">4</span>
<span class="t cell" style="left:202px;width:20px;text-align:center;top:944.500px;font-size:12.500px">5</span>
<span class="t cell" style="left:222.7px;width:20px;text-align:center;top:944.500px;font-size:12.500px">6</span>
<span class="t cell" style="left:243px;width:20px;text-align:center;top:944.500px;font-size:12.500px">7</span>
<span class="t cell" style="left:263.5px;width:20px;text-align:center;top:944.500px;font-size:12.500px">8</span>
<span class="t cell" style="left:284px;width:20px;text-align:center;top:944.500px;font-size:12.500px">9</span>
<span class="t cell" style="left: 377.7px; top: 943.5px; font-size: 12px; letter-spacing: -0.2px;">Sayfa uzunluğu:</span>
<div class="a" style="left:465.500px;top:940.500px;width:45px;height:21px;border:1px solid #bfc5d0;border-radius:3px;background:linear-gradient(#d5d7db 50%,#c9ccd4 50%)"></div>
<span class="t cell" style="left: 472px; top: 944px; font-size: 12px; color: rgb(123, 127, 134); letter-spacing: -0.43px;">10</span>
<svg style="left:498px;top:947.500px" width="7" height="6" viewBox="0 0 7 6" fill="#525860"><path d="M0 0h7L3.500 6z"></path></svg>
<span class="t cell" style="left: 1795px; top: 944px; font-size: 12px; color: rgb(124, 127, 133); letter-spacing: -0.22px;">90 kayıt 9 sayfada</span>
<div class="a" id="bbar"></div>
<div class="bsep" style="left:55.5px;width:2.5px"></div>
<div class="bsep" style="left:153.8px;width:2.5px"></div>
<div class="bsep" style="left:1088px;width:3px"></div>
<div class="bsep" style="left:1176px;width:3px"></div>
<div class="bsep" style="left:1280px;width:2px"></div>
<div class="bsep" style="left:1448px;width:2px"></div>
<div class="bsep" style="left:1766px;width:2px"></div>
<div class="bsep" style="left:1814px;width:2px"></div>
<div class="bsep" style="left:1862px;width:2px"></div>
<svg style="left:18px;top:1006px" width="24" height="19" viewBox="0 0 24 19" fill="#8e8e8e"><path d="M12 0l4.500 3.900V1.200h3.300V6.800L24 10.400l-1.700 2L12 3.600 1.700 12.400 0 10.400z"></path><path d="M12 4.800l8 7V19h-5.500v-5.500h-5V19H4v-7.200z"></path></svg>
<div class="a" style="left:66px;top:1001px;width:80px;height:30px;background:#d6d7da"></div>
<div class="a" style="left:67px;top:1004px;width:18px;height:24px;background:#dc8c5c"></div>
<svg style="left:69px;top:1007px" width="14" height="17" viewBox="0 0 14 17" fill="none" stroke="#4b5570" stroke-width="2"><path d="M1.200 1.500h3.500l3 9.500L13 1M1.800 1.500V15.500H8.500V11"></path></svg>
<span class="t b" style="left:88.900px;top:1000.500px;font-size:27px;line-height:30px;height:30px;color:#dc8c5c;transform-origin:0 50%;transform:scaleX(.477)">DEMYOL</span>
<svg style="left:166px;top:1004px" width="21" height="24" viewBox="0 0 21 24" fill="#8e8e8e"><path d="M2.500 0h16v22H21v2H0v-2h2.500zM4.500 2v20h4.500v-4h3v4h4.500V2z"></path><path d="M6.500 4h2.500v2.500H6.500zM12 4h2.500v2.500H12zM6.500 8.500h2.500V11H6.500zM12 8.500h2.500V11H12zM6.500 13h2.500v2.500H6.500zM12 13h2.500v2.500H12z"></path></svg>
<span class="t bt" style="left: 193.7px; letter-spacing: -0.17px;">Firmalar</span>
<span class="t bt" style="left: 1100px; letter-spacing: 0.02px;">1.2023.0713</span>
<span class="t bt" style="left: 1186.7px; letter-spacing: 0.12px;">81.215.117.231</span>
<span class="t bt" style="left: 1318.5px; letter-spacing: 0.15px;">Mimware Admin</span>
<span class="t bt" style="left: 1556px; letter-spacing: -0.17px;">Demyol İnşaat A.Ş.</span>
<svg style="left:1830.500px;top:1004.500px" width="23" height="23" viewBox="0 0 23 23"><circle cx="11.500" cy="11.500" r="11.500" fill="#8e8e8e"></circle><path d="M7.600 8.600c0-2.300 1.700-3.700 4-3.700 2.400 0 4 1.400 4 3.400 0 2.600-3.200 2.900-3.200 5.200" fill="none" stroke="#d5bd6a" stroke-width="2.600"></path><circle cx="12.300" cy="17.300" r="1.600" fill="#d5bd6a"></circle></svg>
<svg style="left:1878.500px;top:1004px" width="23" height="24" viewBox="0 0 23 24" fill="none" stroke="#8e8e8e" stroke-width="3"><path d="M6.300 5.800a9.500 9.500 0 1 0 10.400 0"></path><path d="M11.500 0v11.500"></path></svg>
<!-- modal -->
<div class="a" id="modal"></div>
<svg style="left:379px;top:223px" width="16" height="16" viewBox="0 0 16 16" fill="none"><path d="M9.100 1H15V6.500" stroke="#59636e" stroke-width="2"></path><path d="M1 9.200V15H6.800" stroke="#59636e" stroke-width="2"></path><path d="M3.200 8.700V3.100H8.900" stroke="#eeaa4e" stroke-width="2.400"></path><path d="M12.700 6.900V12.800H7" stroke="#eeaa4e" stroke-width="2.400"></path></svg>
<span class="t b" style="left: 403.5px; top: 224px; font-size: 14px; line-height: 18px; height: 18px; color: rgb(0, 0, 0); letter-spacing: -0.17px;">Firma Tanımı</span>
<svg style="left:1527px;top:229px" width="11" height="10" viewBox="0 0 11 10" fill="#fff" stroke="#39434f" stroke-width="1.300" stroke-linejoin="round"><path d="M.600.600H3.900L5.500 2.700 7.100.600H10.400L7.400 5 10.400 9.400H7.100L5.500 7.300 3.900 9.400H.600L3.600 5Z"></path></svg>
<div class="a" id="mcont"></div>
<div class="pnl" style="left:385px;top:255px;width:1150px;height:47px"></div>
<div class="pnl" style="left:385px;top:307px;width:1150px;height:578px"></div>
<div class="btn" style="left:394px;top:266px;width:80px;height:26px"></div>
<svg style="left:399.500px;top:272px" width="13" height="12" viewBox="0 0 13 12" fill="#2d3a4a"><path d="M0 0H10.500L13 2.500V12H0ZM2.500 1.300V4.500H9.500V1.300H8.300V3.500H6.300V1.300ZM2.300 7V10.800H10.700V7Z" fill-rule="evenodd"></path></svg>
<span class="t b" style="left: 420.5px; top: 272px; font-size: 12.5px; color: rgb(28, 44, 76); letter-spacing: -0.45px;">Kaydet</span>
<svg style="left:956px;top:265px" width="24" height="24" viewBox="0 0 24 24" fill="none" stroke="#4a5560" stroke-width="1.500" stroke-linecap="round"><g transform="translate(12 11.600) rotate(46)"><path d="M4.500 8V-8.300A4.500 4.500 0 0 0-4.500-8.300V9A3.250 3.250 0 0 0 2 9V-6A2.250 2.250 0 0 0-2.500-6V4.500"></path></g></svg>
<div class="btn" style="left:1446px;top:266px;width:80px;height:26px"></div>
<svg style="left:1453px;top:273px" width="10" height="9" viewBox="0 0 10 9" stroke="#1c2c4c" stroke-width="2.200" fill="none"><path d="M1 .500L9 8.500M9 .500L1 8.500"></path></svg>
<span class="t b" style="left: 1472.5px; top: 272px; font-size: 12.5px; color: rgb(28, 44, 76); letter-spacing: -0.55px;">Kapat</span>
<span class="t lbl" style="left: 416px; top: 323.2px; letter-spacing: -0.34px;">Kodu</span>
<span class="t lbl" style="left: 416px; top: 349.2px; letter-spacing: 0.08px;">Adı</span>
<span class="t lbl" style="left: 416px; top: 376px; letter-spacing: 0.02px;">Vergi Dairesi</span>
<span class="t lbl" style="left: 416px; top: 402px; letter-spacing: 0.3px;">Vergi/Kimlik No</span>
<span class="t lbl" style="left: 416px; top: 428px; letter-spacing: 0.19px;">Web Adresi</span>
<span class="t lbl" style="left: 416px; top: 455.2px; letter-spacing: -0.27px;">E-Posta</span>
<span class="t lbl" style="left: 416px; top: 481.2px; letter-spacing: -0.37px;">ERP Kodu</span>
<span class="t lbl" style="left: 416px; top: 507.2px; letter-spacing: 0.06px;">Ödeme Şekli</span>
<div class="inp" style="left:503px;top:320px;width:280px;height:21px"></div>
<div class="inp" style="left:503px;top:346px;width:280px;height:22px"></div>
<div class="inp" style="left:503px;top:372px;width:280px;height:22px"></div>
<div class="inp" style="left:503px;top:399px;width:280px;height:21px"></div>
<div class="inp" style="left:503px;top:425px;width:280px;height:21px"></div>
<div class="inp" style="left:503px;top:451px;width:280px;height:22px"></div>
<div class="inp" style="left:503px;top:477px;width:280px;height:21px;border:1px dotted #c8c8c8"></div>
<span class="t" style="left: 509px; top: 349.2px; color: rgb(34, 34, 34); font-size: 11.5px; letter-spacing: -0.21px;">AYHAN TAŞKIRAN</span>
<span class="t" style="left: 509px; top: 376px; color: rgb(34, 34, 34); font-size: 11.5px; letter-spacing: -0.33px;">VAN VERGİ DAİRESİ MÜDÜRLÜĞÜ</span>
<span class="t" style="left: 509px; top: 402px; color: rgb(34, 34, 34); font-size: 11.5px; letter-spacing: 0.1px;">62236361706</span>
<div class="inp" style="left:503px;top:503.500px;width:182px"></div><div class="cmb" style="left:665.500px;top:504.500px"></div>
<svg style="left:671.500px;top:511px" width="7" height="6" viewBox="0 0 7 6" fill="#1a1a1a"><path d="M0 0h7L3.500 6z"></path></svg>
<span class="t ph" style="left: 509px; top: 507px; font-size: 12px; letter-spacing: -0.38px;">Seçiniz!</span>
<span class="t lbl" style="left: 689.5px; top: 505.7px; letter-spacing: 0.13px;">İskonto</span>
<div class="inp" style="left:732.500px;top:504.500px;width:49.500px;height:20px;border-color:#dcdcdc"></div>
<span class="t lbl" style="left: 826.2px; top: 323.2px; letter-spacing: 0.18px;">IBAN No</span>
<span class="t lbl" style="left: 826.2px; top: 349.2px; letter-spacing: -0.05px;">Banka Adı</span>
<span class="t lbl" style="left: 826.2px; top: 376px; letter-spacing: 0.04px;">Şube Adı</span>
<span class="t lbl" style="left: 826.2px; top: 402px; letter-spacing: 0.11px;">Hesap No</span>
<span class="t lbl" style="left: 826.2px; top: 428px; letter-spacing: 0.04px;">Firma Grubu</span>
<span class="t lbl" style="left: 826.2px; top: 454.2px; letter-spacing: 0.01px;">Firma Sektör</span>
<div class="inp" style="left:896px;top:320px;width:250px;height:21px"></div>
<div class="inp" style="left:896px;top:346px;width:250px;height:22px"></div>
<div class="inp" style="left:896px;top:372px;width:250px;height:21px"></div>
<div class="inp" style="left:896px;top:399px;width:250px;height:21px"></div>
<div class="inp" style="left:896px;top:424px;width:250px;height:22px"></div>
<div class="cmb" style="left:1127px;top:425px;height:20px"></div>
<svg style="left:1133px;top:431.5px" width="7" height="6" viewBox="0 0 7 6" fill="#1a1a1a"><path d="M0 0h7L3.500 6z"></path></svg>
<span class="t ph" style="left: 902px; top: 427.7px; font-size: 12px; letter-spacing: -0.38px;">Seçiniz!</span>
<div class="inp" style="left:896px;top:450px;width:250px;height:22px"></div>
<div class="cmb" style="left:1127px;top:451px;height:20px"></div>
<svg style="left:1133px;top:457.5px" width="7" height="6" viewBox="0 0 7 6" fill="#1a1a1a"><path d="M0 0h7L3.500 6z"></path></svg>
<span class="t ph" style="left: 902px; top: 453.7px; font-size: 12px; letter-spacing: -0.38px;">Seçiniz!</span>
<div class="cb" style="left:896px;top:479px"></div><span class="t lbl" style="left: 917px; top: 476.5px; letter-spacing: -0.05px;">KVKK Onayı Mevcut</span>
<div class="cb" style="left:1043px;top:479px"></div><span class="t lbl" style="left: 1063.3px; top: 476.5px; letter-spacing: -0.32px;">Tüzel</span>
<div class="cb" style="left:896px;top:504px"></div><span class="t lbl" style="left: 917px; top: 501.7px; letter-spacing: -0.07px;">Kullanım Dışı</span>
<span class="t lbl" style="left: 1189.5px; top: 320.7px; letter-spacing: -0.04px;">Açıklama</span>
<div class="inp" style="left:1241px;top:319px;width:250px;height:60px"></div>
<div class="a" id="tabs"></div>
<div class="a" style="left:396px;top:536px;width:79px;height:36px;background:#788799;border-radius:3px 0 0 0"></div>
<div class="a" style="left:475px;top:536px;width:1px;height:36px;background:#323d45"></div><div class="a" style="left:476px;top:536px;width:1px;height:36px;background:#5a6771"></div>
<div class="a" style="left:572px;top:536px;width:1px;height:36px;background:#323d45"></div><div class="a" style="left:573px;top:536px;width:1px;height:36px;background:#5a6771"></div>
<div class="a" style="left:715px;top:536px;width:1px;height:36px;background:#323d45"></div><div class="a" style="left:716px;top:536px;width:1px;height:36px;background:#5a6771"></div>
<div class="a" style="left:842px;top:536px;width:1px;height:36px;background:#323d45"></div><div class="a" style="left:843px;top:536px;width:1px;height:36px;background:#5a6771"></div>
<span class="t tt" style="left:415px">Kişiler</span>
<span class="t tt" style="left:495.7px">Adresler</span>
<span class="t tt" style="left:592px">Ek Alan Bilgileri</span>
<span class="t tt" style="left:735px">Stok Grupları</span>
<span class="t tt" style="left:863.7px">Log Bilgisi</span>
<div class="a" id="ig"></div>
<div class="a" style="left:397px;top:572px;width:1126px;height:42px;background:linear-gradient(#f5f8fc 0,#eff4fa 15px,#e0e9f5 16px,#dfe8f4 31px,#e9f0f8 32px,#e9f0f8 42px)"></div>
<div class="a" style="left:397px;top:614px;width:1126px;height:26px;background:#f0f4fa"></div>
<div class="a" style="left:397px;top:640px;width:1126px;height:1px;background:#b3c5dc"></div>
<div class="a" style="left:397px;top:641px;width:1126px;height:34px;background:#edf2f9"></div>
<div class="a" style="left:397px;top:675px;width:1126px;height:1px;background:#b3c5dc"></div>
<svg style="left:411px;top:588px" width="10" height="10" fill="#2a3340" stroke="#2a3340" viewBox="0 0 10 10"><path d="M5 0V10M0 5H10" fill="none" stroke-width="2"></path></svg>
<span class="t b" style="left: 437px; top: 584.5px; font-size: 12px; color: rgb(37, 58, 90); letter-spacing: 0.01px;">Yeni kayıt</span>
<svg style="left:1292px;top:587px" width="11" height="12" fill="#1e2f4f" stroke="#1e2f4f" viewBox="0 0 11 12"><path d="M5.500 2.300A4.300 4.300 0 1 0 9.800 6.600" fill="none" stroke-width="1.600"></path><path d="M5 0L8.200 2.500 5 4.900Z" stroke="none"></path></svg>
<span class="t b" style="left: 1318.3px; top: 584.5px; font-size: 12px; color: rgb(37, 58, 90); letter-spacing: -0.11px;">Yenile</span>
<svg style="left:1365.8px;top:585px" width="12" height="16" viewBox="0 0 12 16" fill="#1e2f55" stroke="#1e2f55"><path d="M.7.700H8.200L11.300 3.800V15.300H.7Z" fill="none" stroke-width="1.300"></path><path d="M8 .7L11.300 4H8Z" stroke-width=".6"></path><text transform="translate(6.200 13.300) scale(.9 1)" font-family="Liberation Sans,sans-serif" font-weight="bold" text-anchor="middle" stroke="none" font-size="11" fill="#1e2f55" style="stroke:#1e2f55;stroke-width:.35px">X</text></svg>
<svg style="left:1405.3px;top:585px" width="12" height="16" viewBox="0 0 12 16" fill="#1e2f55" stroke="#1e2f55"><path d="M.7.700H8.200L11.300 3.800V15.300H.7Z" fill="none" stroke-width="1.300"></path><path d="M8 .7L11.300 4H8Z" stroke-width=".6"></path><path d="M2.300 12.400C4.600 10.600 5.900 7.300 5.600 4.900 5.400 3.800 4.500 4.100 4.700 5.200 5.100 7.600 7.200 10 10 10.500 8.500 9.700 4.500 10.600 2.300 12.400Z" fill="none" stroke-width="1"></path></svg>
<svg style="left:1444.8px;top:585px" width="12" height="16" viewBox="0 0 12 16" fill="#1e2f55" stroke="#1e2f55"><path d="M.7.700H8.200L11.300 3.800V15.300H.7Z" fill="none" stroke-width="1.300"></path><path d="M8 .7L11.300 4H8Z" stroke-width=".6"></path><text transform="translate(6 10) scale(.82 1)" font-family="Liberation Sans,sans-serif" font-weight="bold" text-anchor="middle" stroke="none" font-size="6.500" fill="#1e2f55">csv</text></svg>
<svg style="left:1484.5px;top:585px" width="12" height="16" viewBox="0 0 12 16" fill="#1e2f55" stroke="#1e2f55"><path d="M.7.700H8.200L11.300 3.800V15.300H.7Z" fill="none" stroke-width="1.300"></path><path d="M8 .7L11.300 4H8Z" stroke-width=".6"></path><text transform="translate(6 13.200) scale(.8 1)" font-family="Liberation Sans,sans-serif" font-weight="bold" text-anchor="middle" stroke="none" font-size="11" fill="#1e2f55" style="stroke:#1e2f55;stroke-width:.3px">W</text></svg>
<div class="a" style="left:420.5px;top:615px;width:1px;height:25px;background:#d3deec"></div><div class="a" style="left:421.5px;top:615px;width:1px;height:25px;background:#fbfcfe"></div>
<div class="a" style="left:445.5px;top:615px;width:1px;height:25px;background:#d3deec"></div><div class="a" style="left:446.5px;top:615px;width:1px;height:25px;background:#fbfcfe"></div>
<div class="a" style="left:470.5px;top:615px;width:1px;height:25px;background:#d3deec"></div><div class="a" style="left:471.5px;top:615px;width:1px;height:25px;background:#fbfcfe"></div>
<div class="a" style="left:756.5px;top:615px;width:1px;height:25px;background:#d3deec"></div><div class="a" style="left:757.5px;top:615px;width:1px;height:25px;background:#fbfcfe"></div>
<div class="a" style="left:866.5px;top:615px;width:1px;height:25px;background:#d3deec"></div><div class="a" style="left:867.5px;top:615px;width:1px;height:25px;background:#fbfcfe"></div>
<div class="a" style="left:1152px;top:615px;width:1px;height:25px;background:#d3deec"></div><div class="a" style="left:1153px;top:615px;width:1px;height:25px;background:#fbfcfe"></div>
<div class="a" style="left:1282px;top:615px;width:1px;height:25px;background:#d3deec"></div><div class="a" style="left:1283px;top:615px;width:1px;height:25px;background:#fbfcfe"></div>
<div class="a" style="left:1412px;top:615px;width:1px;height:25px;background:#d3deec"></div><div class="a" style="left:1413px;top:615px;width:1px;height:25px;background:#fbfcfe"></div>
<span class="t ih" style="left: 480.4px; top: 620.5px; letter-spacing: -0.2px;">Adı Soyadı</span>
<span class="t ih" style="left: 765.7px; top: 620.5px;">Ünvanı</span>
<span class="t ih" style="left: 875.7px; top: 620.5px; letter-spacing: -0.38px;">E-Posta</span>
<span class="t ih" style="left: 1161.3px; top: 620.5px; letter-spacing: -0.14px;">Cep Telefonu</span>
<span class="t ih" style="left: 1291.5px; top: 620.5px; letter-spacing: -0.11px;">Telefon</span>
<span class="t ih" style="left: 1421.5px; top: 620.5px; letter-spacing: -0.16px;">Kullanım Dışı</span>
<div class="inp" style="left:480px;top:645px;width:152px;height:24px"></div>
<div class="inp" style="left:766px;top:645px;width:69px;height:24px"></div>
<div class="inp" style="left:876px;top:645px;width:151px;height:24px"></div>
<div class="inp" style="left:1161px;top:645px;width:84px;height:24px"></div>
<div class="inp" style="left:1291.5px;top:645px;width:83px;height:24px"></div>
<svg style="left:639.7px;top:650px" width="11" height="12" fill="#000" stroke="#000" viewBox="0 0 11 12"><path d="M0 0H11L6.700 5.200V10.200L4.300 12V5.200Z"></path></svg>
<svg style="left:843.5px;top:650px" width="11" height="12" fill="#000" stroke="#000" viewBox="0 0 11 12"><path d="M0 0H11L6.700 5.200V10.200L4.300 12V5.200Z"></path></svg>
<svg style="left:1035.5px;top:650px" width="11" height="12" fill="#000" stroke="#000" viewBox="0 0 11 12"><path d="M0 0H11L6.700 5.200V10.200L4.300 12V5.200Z"></path></svg>
<svg style="left:1253px;top:650px" width="11" height="12" fill="#000" stroke="#000" viewBox="0 0 11 12"><path d="M0 0H11L6.700 5.200V10.200L4.300 12V5.200Z"></path></svg>
<svg style="left:1382.5px;top:650px" width="11" height="12" fill="#000" stroke="#000" viewBox="0 0 11 12"><path d="M0 0H11L6.700 5.200V10.200L4.300 12V5.200Z"></path></svg>
<svg style="left:1447px;top:650px" width="11" height="12" fill="#000" stroke="#000" viewBox="0 0 11 12"><path d="M0 0H11L6.700 5.200V10.200L4.300 12V5.200Z"></path></svg>
<div class="cb" style="left:1421px;top:648px"></div>
<span class="t" style="left: 398px; top: 678px; font-size: 11.5px; color: rgb(34, 34, 34); letter-spacing: 0.12px;">Gösterilecek kayıt bulunamadı.</span>

</body></html>
